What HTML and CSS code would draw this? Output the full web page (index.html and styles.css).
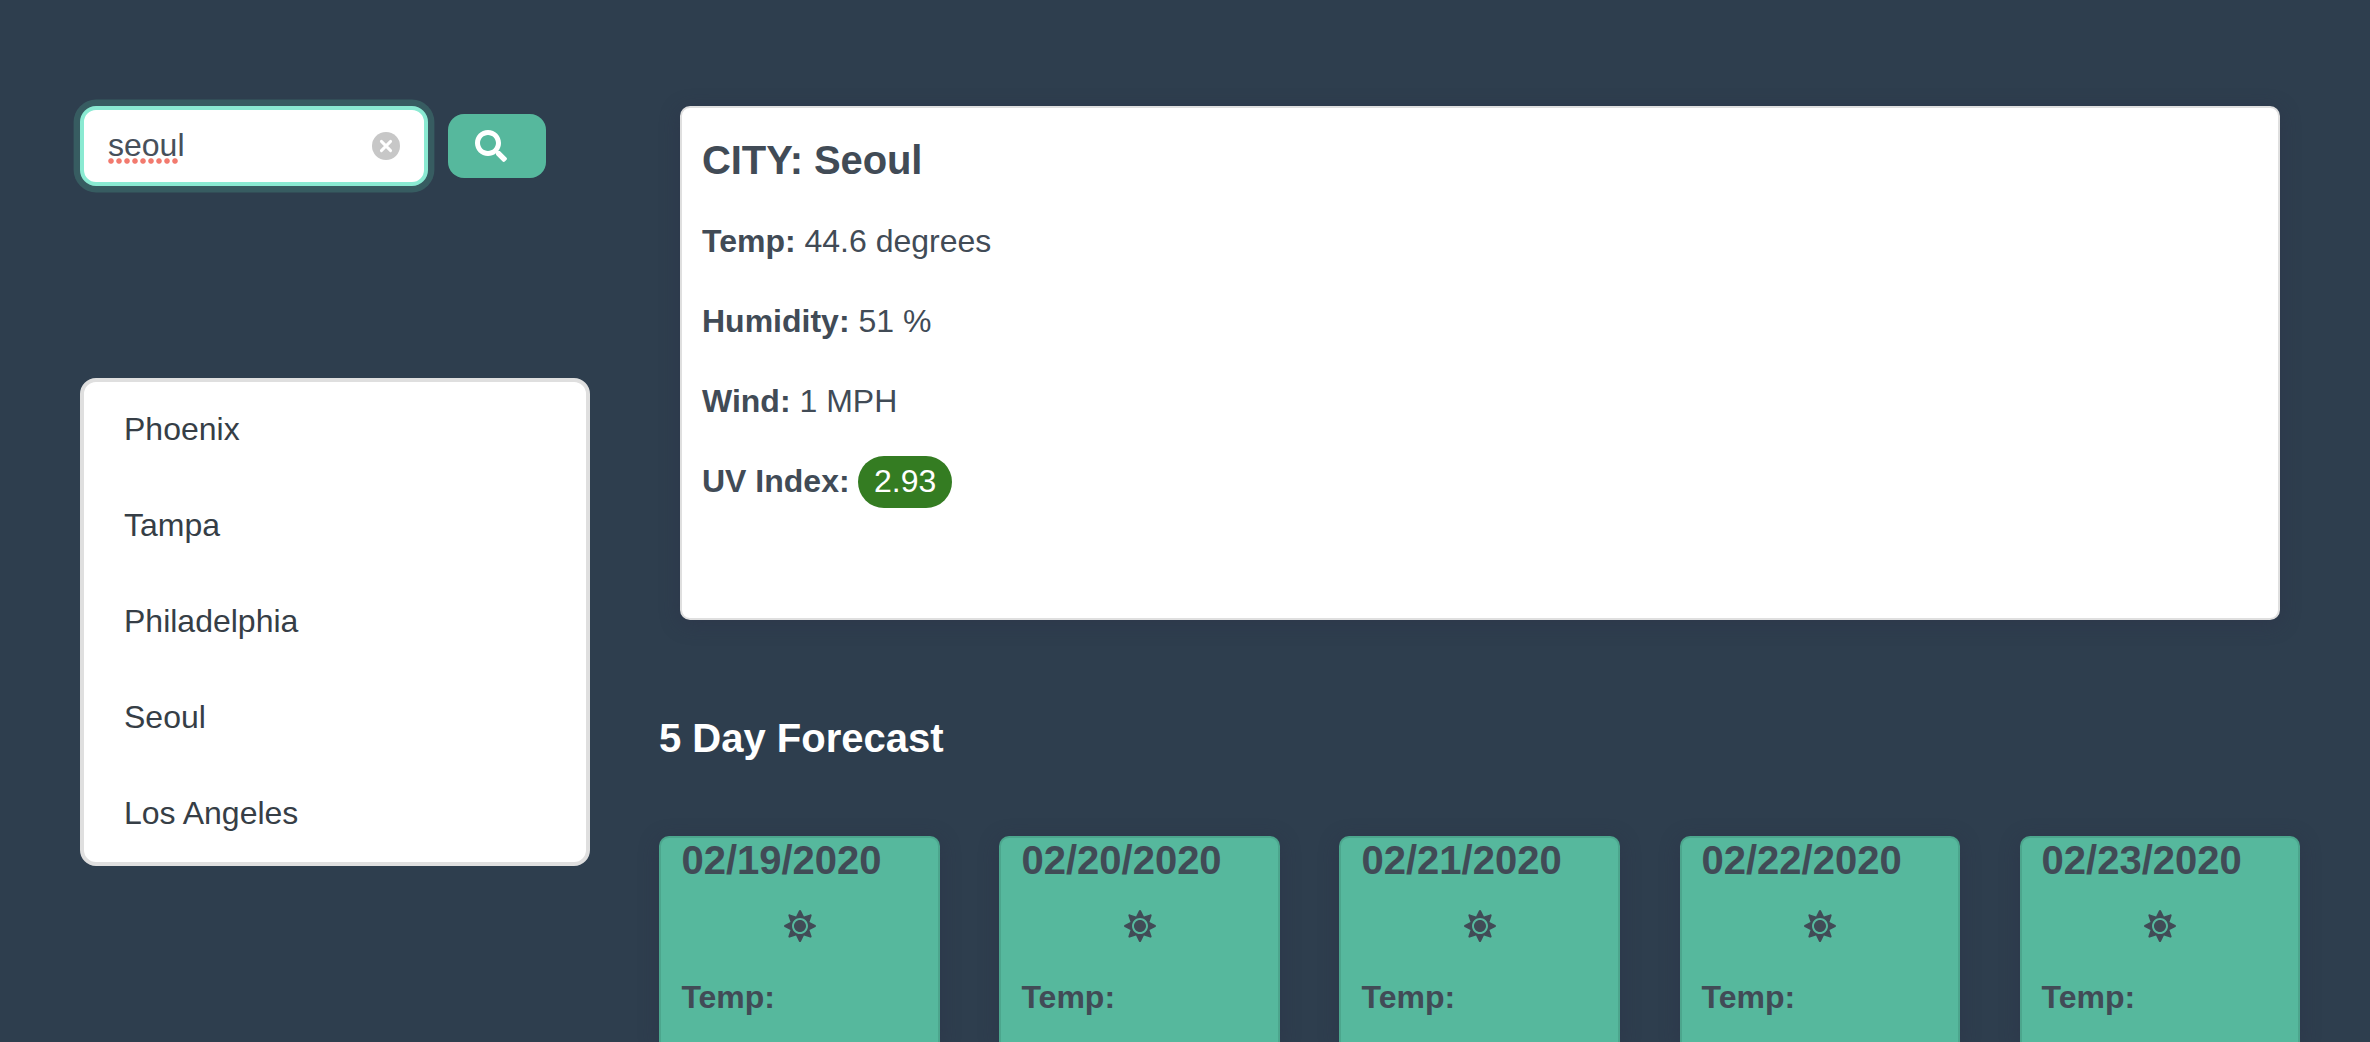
FILE: index.html
```html
<!DOCTYPE html>
<html lang="en">
<head>
<meta charset="utf-8">
<title>Weather Dashboard</title>
<link rel="stylesheet" href="styles.css">
</head>
<body>
<svg class="sprite" aria-hidden="true">
  <symbol id="sun" viewBox="0 0 512 512"><path d="M256 160c-52.9 0-96 43.1-96 96s43.1 96 96 96 96-43.1 96-96-43.1-96-96-96zm246.4 80.5l-94.7-47.3 33.5-100.4c4.5-13.6-8.4-26.5-21.9-21.9l-100.4 33.5-47.4-94.8c-6.4-12.8-24.6-12.8-31 0l-47.3 94.7L92.7 70.8c-13.6-4.5-26.5 8.4-21.9 21.9l33.5 100.4-94.7 47.4c-12.8 6.4-12.8 24.6 0 31l94.7 47.3-33.5 100.5c-4.5 13.6 8.4 26.5 21.9 21.9l100.4-33.5 47.3 94.7c6.4 12.8 24.6 12.8 31 0l47.3-94.7 100.4 33.5c13.6 4.5 26.5-8.4 21.9-21.9l-33.5-100.4 94.7-47.3c13-6.5 13-24.7.2-31.1zm-155.9 106c-49.9 49.9-131.1 49.9-181 0-49.9-49.9-49.9-131.1 0-181 49.9-49.9 131.1-49.9 181 0 49.9 49.9 49.9 131.1 0 181z"/></symbol>
</svg>
<div class="page">
  <aside class="sidebar">
    <form class="search">
      <div class="search-field">
        <input class="search-input" type="text" value="seoul" spellcheck="false" aria-label="City">
        <span class="misspelling"></span>
        <svg class="clear" viewBox="0 0 28 28"><circle cx="14" cy="14" r="14" fill="#c7c7c7"/><path d="M9.4 9.4l9.2 9.2M18.6 9.4l-9.2 9.2" stroke="#fff" stroke-width="2.9" stroke-linecap="round"/></svg>
      </div>
      <button class="search-button" type="button" aria-label="Search">
        <svg class="icon" viewBox="0 0 512 512"><path d="M505 442.7L405.3 343c-4.5-4.5-10.6-7-17-7H372c27.6-35.3 44-79.7 44-128C416 93.1 322.9 0 208 0S0 93.1 0 208s93.1 208 208 208c48.3 0 92.7-16.4 128-44v16.3c0 6.4 2.5 12.5 7 17l99.7 99.7c9.4 9.4 24.6 9.4 33.9 0l28.3-28.3c9.4-9.4 9.4-24.6.1-34zM208 336c-70.7 0-128-57.2-128-128 0-70.7 57.2-128 128-128 70.7 0 128 57.2 128 128 0 70.7-57.2 128-128 128z"/></svg>
      </button>
    </form>
    <ul class="history">
      <li>Phoenix</li>
      <li>Tampa</li>
      <li>Philadelphia</li>
      <li>Seoul</li>
      <li>Los Angeles</li>
    </ul>
  </aside>
  <main class="content">
    <section class="current">
      <h2>CITY: Seoul</h2>
      <p><b>Temp:</b> 44.6 degrees</p>
      <p><b>Humidity:</b> 51 %</p>
      <p><b>Wind:</b> 1 MPH</p>
      <p><b>UV Index:</b> <span class="uv">2.93</span></p>
    </section>
    <h2 class="forecast-title">5 Day Forecast</h2>
    <section class="forecast">
      <article class="day"><h3>02/19/2020</h3><svg class="icon"><use href="#sun"/></svg><p>Temp:</p></article>
      <article class="day"><h3>02/20/2020</h3><svg class="icon"><use href="#sun"/></svg><p>Temp:</p></article>
      <article class="day"><h3>02/21/2020</h3><svg class="icon"><use href="#sun"/></svg><p>Temp:</p></article>
      <article class="day"><h3>02/22/2020</h3><svg class="icon"><use href="#sun"/></svg><p>Temp:</p></article>
      <article class="day"><h3>02/23/2020</h3><svg class="icon"><use href="#sun"/></svg><p>Temp:</p></article>
    </section>
  </main>
</div>
</body>
</html>
```
FILE: styles.css
```css
* { box-sizing: border-box; margin: 0; padding: 0; }

body {
  height: 100vh;
  overflow: hidden;
  background: #2e3e4e;
  color: #414b56;
  font: 32px/48px "Liberation Sans", Arial, Helvetica, sans-serif;
}

.sprite { position: absolute; width: 0; height: 0; }
.icon { display: block; width: 32px; height: 32px; fill: currentColor; }

.page {
  display: flex;
  gap: 68px;
  padding: 106px 70px 0 80px;
}

.sidebar { width: 510px; flex: none; }

.search { display: flex; align-items: center; gap: 20px; }
.search-field { position: relative; width: 348px; height: 80px; }
.search-input {
  display: block;
  width: 100%;
  height: 100%;
  padding: 0 24px 2px;
  border: 4px solid #8aead2;
  border-radius: 16px;
  outline: none;
  background: #fff;
  box-shadow: 0 0 0 6.4px rgba(85, 184, 157, .25);
  color: #47505b;
  font: inherit;
}
.misspelling {
  position: absolute;
  left: 28px;
  top: 52px;
  width: 72px;
  height: 6px;
  background: radial-gradient(circle at 3px 3px, #f27a6e 2.3px, rgba(242, 122, 110, 0) 3.2px) 0 0 / 8px 6px;
}
.clear { position: absolute; right: 28px; top: 26px; width: 28px; height: 28px; }

.search-button {
  display: flex;
  align-items: center;
  width: 98px;
  height: 64px;
  padding-left: 27px;
  border: 0;
  border-radius: 16px;
  background: #56b89d;
  color: #fff;
}

.history {
  margin-top: 192px;
  border: 4px solid #dfdfdf;
  border-radius: 16px;
  background: #fff;
  color: #363e46;
  list-style: none;
}
.history li { height: 96px; padding-left: 40px; line-height: 94px; }

.content { flex: 1; min-width: 0; }

.current {
  height: 514px;
  margin: 0 20px 0 22px;
  padding: 28px 20px;
  border: 2px solid #dfdfdf;
  border-radius: 10px;
  background: #fff;
  box-shadow: 0 4px 20px rgba(46, 44, 70, .4);
}
h2, h3 { font-size: 40px; line-height: 48px; }
.current h2 { margin-bottom: 33px; letter-spacing: -.1px; }
.current p { margin-bottom: 32px; }
.uv {
  padding: 7px 15.5px 9px;
  border-radius: 26px;
  background: #347c22;
  color: #fff;
}

.forecast-title { margin-top: 94px; padding-left: 1px; color: #fff; }

.forecast {
  display: grid;
  grid-template-columns: repeat(5, 1fr);
  gap: 59.6px;
  margin: 74px 0 0 1.4px;
}
.day {
  height: 206px;
  padding: 0 20px;
  border: 2px solid #4ca68d;
  border-bottom: 0;
  border-radius: 10px 10px 0 0;
  background: #56b89d;
  box-shadow: 0 4px 20px rgba(46, 44, 70, .4);
}
.day h3 { margin: -2px -10px 0 0; white-space: nowrap; }
.day .icon { margin: 26px auto 0; }
.day p { margin-top: 31px; font-weight: bold; }
```
